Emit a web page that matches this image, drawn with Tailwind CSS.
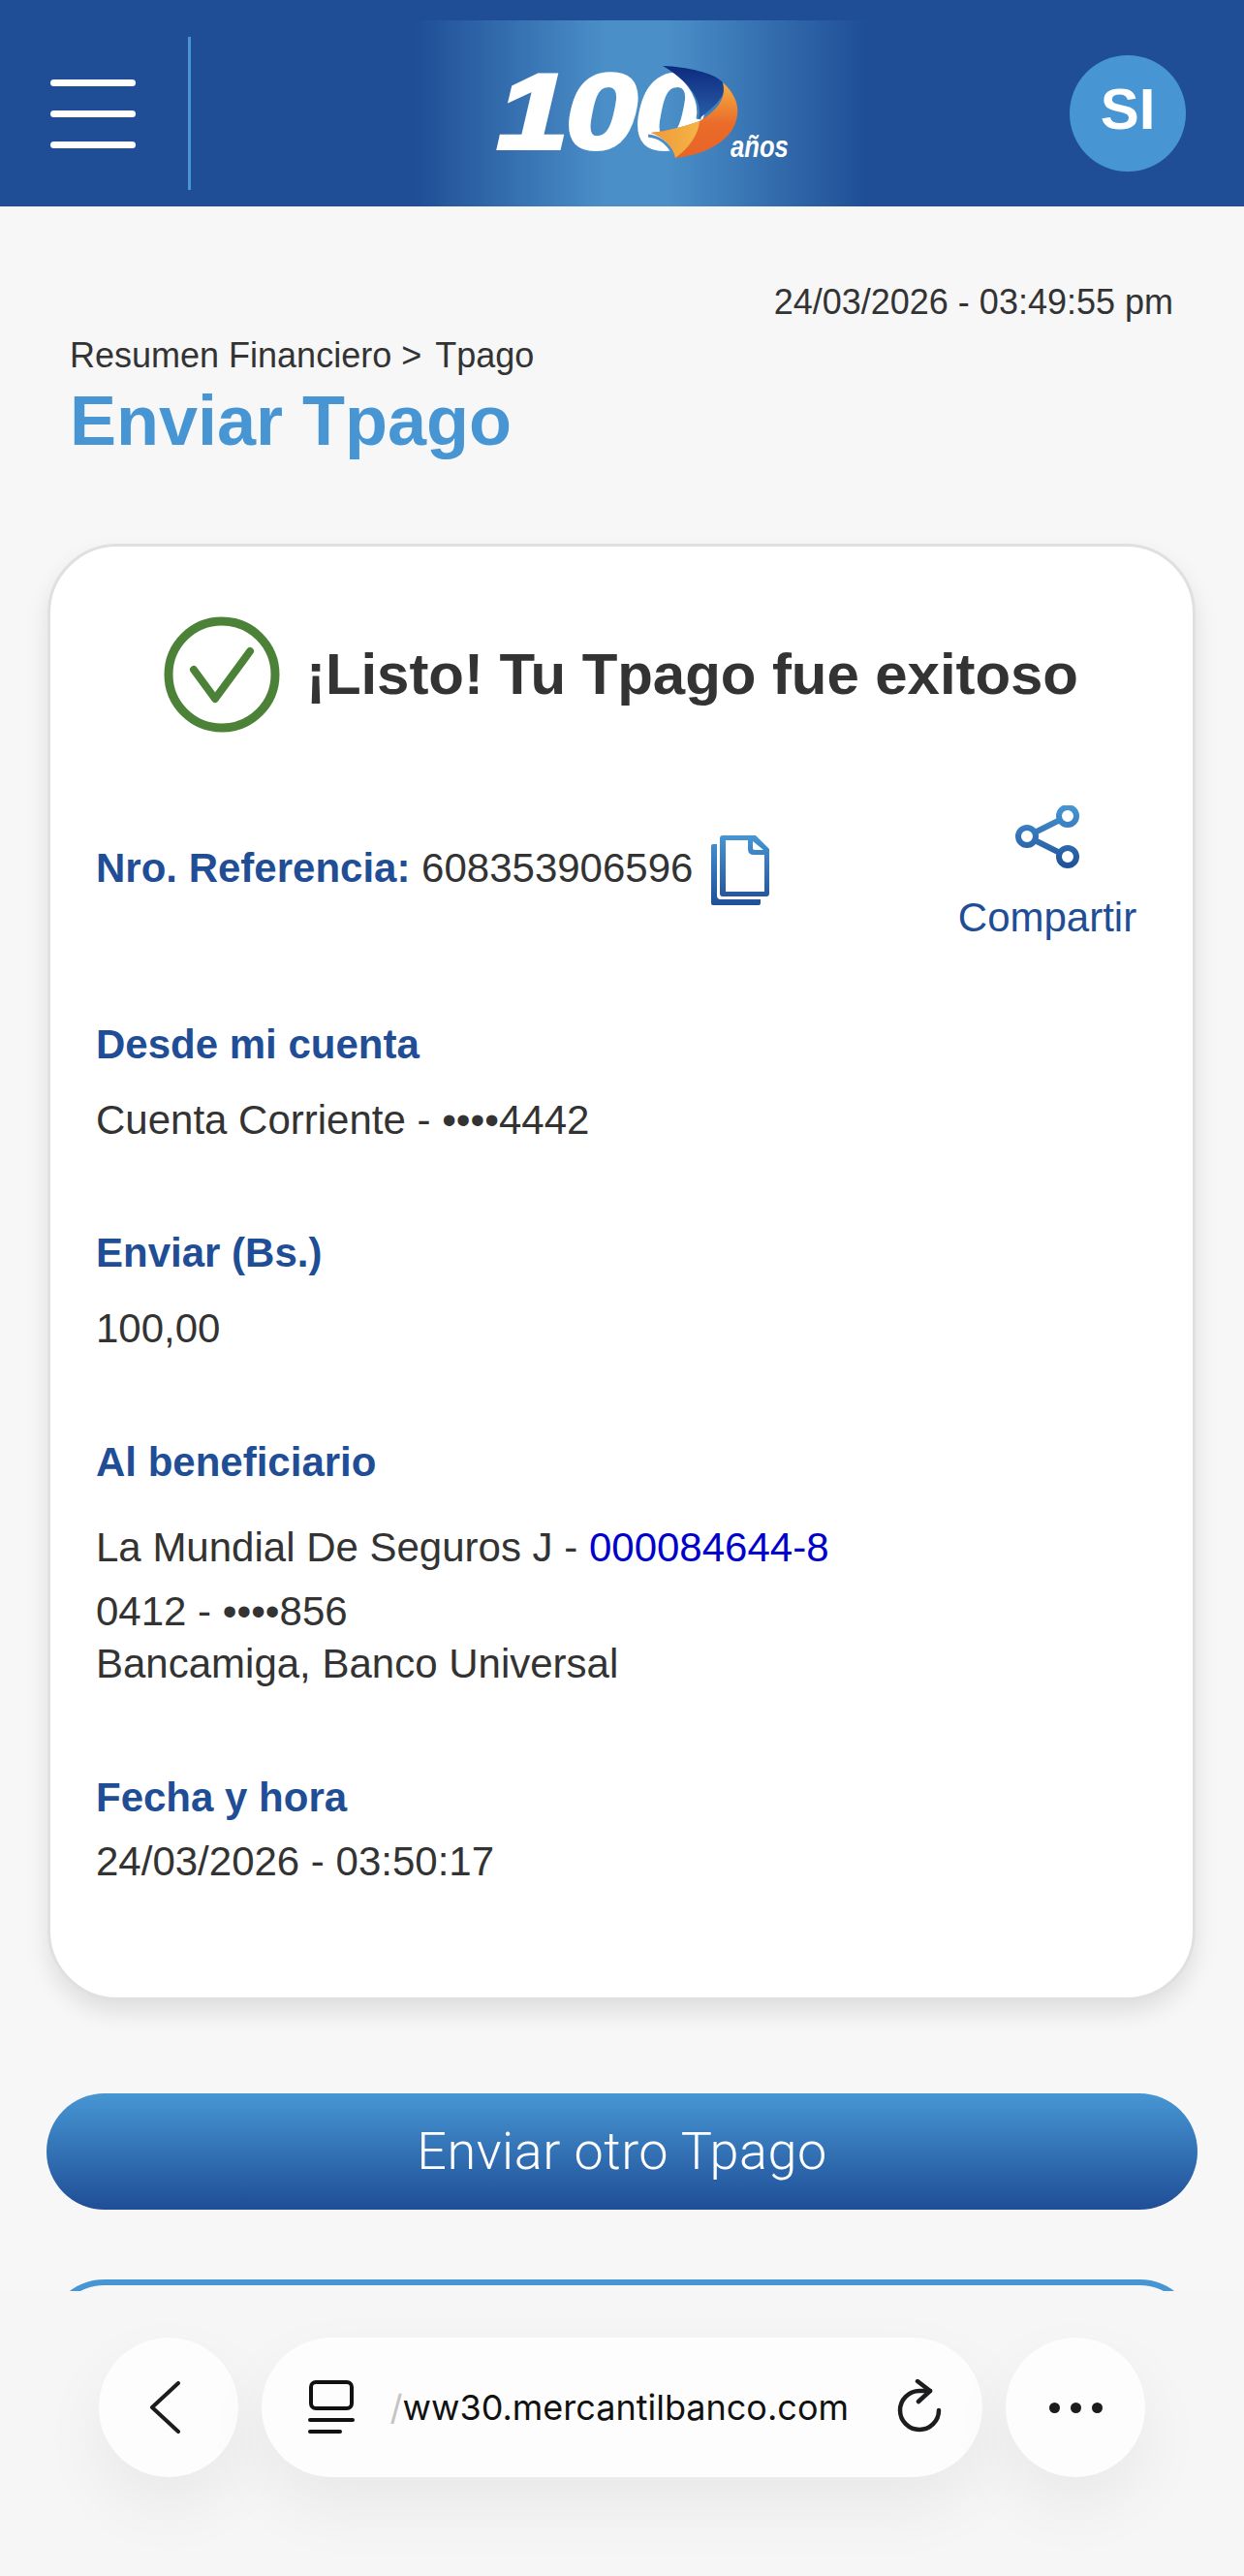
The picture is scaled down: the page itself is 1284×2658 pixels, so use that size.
<!DOCTYPE html>
<html lang="es">
<head>
  <meta charset="UTF-8">
  <title>Enviar Tpago</title>
  <script src="https://cdn.jsdelivr.net/npm/@tailwindcss/browser@4"></script>
</head>
<body class="relative w-[1284px] h-[2658px] overflow-hidden bg-[#f7f7f8] font-['Liberation_Sans',Arial,sans-serif] text-[#333]">

  <!-- Header -->
  <header class="flex items-center h-[213px] pt-[21px] bg-[#1f4e96]">
    <div class="ml-[52px] w-[88px] flex flex-col gap-[25px]">
      <span class="block h-[7px] rounded-full bg-white"></span>
      <span class="block h-[7px] rounded-full bg-white"></span>
      <span class="block h-[7px] rounded-full bg-white"></span>
    </div>
    <div class="ml-[54px] w-[3px] h-[158px] bg-[#4796d3]"></div>

    <!-- Logo -->
    <div class="relative ml-[232px] w-[465px] h-[192px] self-end shrink-0 overflow-hidden bg-[linear-gradient(90deg,#1f4e96,#4a8fc8_42%,#4a8fc8_56%,#1f4e96)]">
      <span class="absolute left-[84px] top-[34px] origin-left scale-x-[1.2] font-bold italic text-[110px] leading-[120px] tracking-[-2px] text-white [-webkit-text-stroke:4px_white]">100</span>
      <svg class="absolute left-[230px] top-[40px]" width="110" height="110" viewBox="0 0 110 110">
        <defs>
          <linearGradient id="sailTop" x1="0" y1="0" x2="0" y2="1"><stop offset="0" stop-color="#0d2a7f"/><stop offset="1" stop-color="#2a5fa8"/></linearGradient>
          <linearGradient id="sailRight" x1="0" y1="0" x2="0" y2="1"><stop offset="0" stop-color="#f4b043"/><stop offset="0.55" stop-color="#ea6b2a"/><stop offset="1" stop-color="#e86427"/></linearGradient>
          <linearGradient id="sailLeft" x1="0" y1="0" x2="1" y2="0"><stop offset="0" stop-color="#ef9a3a"/><stop offset="1" stop-color="#f4b445"/></linearGradient>
        </defs>
        <path d="M10 79 C20 80 30 86 36 98" fill="none" stroke="#4a8fc8" stroke-width="3"/>
        <path d="M33 9 C55 22 66 44 62 62" fill="none" stroke="#3f83bf" stroke-width="5"/>
        <path d="M25 7 C50 8 78 14 87 24 C92 32 88 42 62 62 C66 48 58 26 25 7 Z" fill="url(#sailTop)"/>
        <path d="M87 24 C98 34 104 46 102 58 C100 72 92 80 84 86 C70 96 54 100 38 102 C37 94 30 82 13 76 C30 74 46 70 63 64 C76 56 92 44 87 24 Z" fill="url(#sailRight)"/>
        <path d="M13 76 C30 74 46 70 63 64 C62 78 52 92 38 102 C37 94 30 82 13 76 Z" fill="url(#sailLeft)"/>
      </svg>
      <span class="absolute left-[325px] top-[113px] origin-left scale-x-[0.8] font-bold italic text-[32px] leading-[34px] text-white">años</span>
    </div>

    <div class="ml-[210px] w-[120px] h-[120px] pb-[8px] shrink-0 rounded-full bg-[#4796d3] flex items-center justify-center text-white font-bold text-[60px] leading-[70px]">SI</div>
  </header>

  <main class="relative">
    <p class="absolute right-[73px] top-[78px] text-[36px] leading-[42px]">24/03/2026 - 03:49:55 pm</p>
    <div class="pt-[133px] pl-[72px]">
      <p class="text-[36px] leading-[42px]">Resumen Financiero &gt; <span class="ml-[4px]">Tpago</span></p>
      <h1 class="mt-[4px] font-bold text-[72px] leading-[84px] text-[#4796d3]">Enviar Tpago</h1>
    </div>

    <!-- Card -->
    <section class="ml-[49px] mt-[85px] w-[1185px] h-[1503px] rounded-[72px] border-[3px] border-[#dfe0e1] bg-white shadow-[0_12px_24px_rgba(0,0,0,0.10)] pl-[47px] pr-[60px] pt-[72px]">
      <div class="flex items-center h-[120px] ml-[70px]">
        <svg width="120" height="120" viewBox="0 0 120 120" fill="none" stroke="#4c8238">
          <circle cx="60" cy="60" r="55" stroke-width="9"/>
          <path d="M31 55 L53 85 L89 36" stroke-width="8" stroke-linecap="round" stroke-linejoin="round"/>
        </svg>
        <h2 class="ml-[27px] font-bold text-[60px] leading-[70px] tracking-[-0.07px] whitespace-nowrap">¡Listo! Tu Tpago fue exitoso</h2>
      </div>

      <div class="relative flex items-center h-[72px] mt-[104px]">
        <p class="text-[42px] leading-[50px]"><b class="text-[#1f4e96]">Nro. Referencia:</b> 608353906596</p>
        <svg class="ml-[19px] mt-[4px]" width="61" height="73" viewBox="0 0 61 73">
          <defs>
            <linearGradient id="iconGrad" gradientUnits="userSpaceOnUse" x1="0" y1="0" x2="0" y2="73"><stop offset="0" stop-color="#4796d3"/><stop offset="1" stop-color="#1f4e96"/></linearGradient>
          </defs>
          <path d="M2 9 H6 V62 Q6 66 10 66 H51 V70 Q51 72 49 72 H2 Q0 72 0 70 V11 Q0 9 2 9 Z" fill="url(#iconGrad)"/>
          <path d="M9 3 Q9 0 12 0 H46 L60 14 V60 Q60 63 57 63 H12 Q9 63 9 60 Z M15 5 V58 H55 V20 H44 Q38 20 38 14 V5 Z M43 6 V13 Q43 15 45 15 H54 Z" fill="url(#iconGrad)" fill-rule="evenodd"/>
        </svg>
        <!-- Share -->
        <div class="absolute left-[891px] top-[-29px] w-[182px] flex flex-col items-center">
          <svg width="66" height="66" viewBox="0 0 66 66" fill="none" stroke="url(#iconGrad2)" stroke-width="6">
            <defs>
              <linearGradient id="iconGrad2" gradientUnits="userSpaceOnUse" x1="0" y1="0" x2="0" y2="66"><stop offset="0" stop-color="#4796d3"/><stop offset="1" stop-color="#1f4e96"/></linearGradient>
            </defs>
            <circle cx="54" cy="11" r="9"/>
            <circle cx="12" cy="32" r="9"/>
            <circle cx="54" cy="53" r="9"/>
            <path d="M20 28 L46 15 M20 36 L46 49"/>
          </svg>
          <span class="mt-[25px] text-[42px] leading-[50px] text-[#1f4e96]">Compartir</span>
        </div>
      </div>

      <div class="mt-[121px]">
        <h3 class="font-bold text-[42px] leading-[50px] text-[#1f4e96]">Desde mi cuenta</h3>
        <p class="mt-[28px] text-[42px] leading-[50px]">Cuenta Corriente - ••••4442</p>
      </div>

      <div class="mt-[87px]">
        <h3 class="font-bold text-[42px] leading-[50px] text-[#1f4e96]">Enviar (Bs.)</h3>
        <p class="mt-[28px] text-[42px] leading-[50px]">100,00</p>
      </div>

      <div class="mt-[88px]">
        <h3 class="font-bold text-[42px] leading-[50px] text-[#1f4e96]">Al beneficiario</h3>
        <p class="mt-[38px] text-[42px] leading-[50px]">La Mundial De Seguros J - <span class="text-[#0000cd]">000084644-8</span></p>
        <p class="mt-[14px] text-[42px] leading-[54px]">0412 - ••••856<br>Bancamiga, Banco Universal</p>
      </div>

      <div class="mt-[86px]">
        <h3 class="font-bold text-[42px] leading-[50px] text-[#1f4e96]">Fecha y hora</h3>
        <p class="mt-[16px] text-[42px] leading-[50px]">24/03/2026 - 03:50:17</p>
      </div>
    </section>

    <!-- Buttons -->
    <button class="block mx-[48px] mt-[96px] w-[1188px] h-[120px] rounded-full bg-[linear-gradient(180deg,#4796d3,#1f4e96)] text-white font-['Roboto',sans-serif] font-light text-[54px] leading-[64px] tracking-[0.5px]">Enviar otro Tpago</button>
    <div class="mx-[48px] mt-[72px] h-[120px] rounded-full border-[6px] border-[#4796d3]"></div>
  </main>

  <!-- Browser toolbar -->
  <div class="absolute left-0 bottom-0 w-full h-[294px] bg-[#f6f6f7] pt-[48px] pl-[102px] flex items-start">
    <div class="w-[144px] h-[144px] rounded-full bg-[#fdfdfd] shadow-[0_30px_70px_rgba(0,0,0,0.06)] flex items-center justify-center">
      <svg class="mr-[8px]" width="32" height="54" viewBox="0 0 32 54" fill="none" stroke="#1c1c1e" stroke-width="4" stroke-linecap="round" stroke-linejoin="round"><path d="M30 2 L3 27 L30 52"/></svg>
    </div>
    <div class="ml-[24px] w-[744px] h-[144px] rounded-full bg-[#fdfdfd] shadow-[0_30px_70px_rgba(0,0,0,0.06)] flex items-center pl-[48px]">
      <svg width="48" height="56" viewBox="0 0 48 56" fill="none" stroke="#111" stroke-linecap="round" class="shrink-0">
        <rect x="3" y="2" width="42" height="27" rx="5" stroke-width="4"/>
        <path d="M2 41 H46" stroke-width="4"/>
        <path d="M2 53 H33" stroke-width="4"/>
      </svg>
      <div class="ml-[43px] w-[467px] whitespace-nowrap flex justify-end font-['Inter',sans-serif] text-[36px] leading-[44px] text-[#111]">
        <span class="text-[#c4c4c4]">/</span><span>ww30.mercantilbanco.com</span>
      </div>
      <svg class="ml-[49px]" width="50" height="58" viewBox="0 0 50 58" fill="none" stroke="#1c1c1e" stroke-width="4.5" stroke-linecap="round" stroke-linejoin="round">
        <path d="M35 12 H24 A20 20 0 1 0 44 32"/>
        <path d="M22 2 L35 12 L23 23"/>
      </svg>
    </div>
    <div class="ml-[24px] w-[144px] h-[144px] rounded-full bg-[#fdfdfd] shadow-[0_30px_70px_rgba(0,0,0,0.06)] flex items-center justify-center gap-[11px]">
      <span class="w-[11px] h-[11px] rounded-full bg-[#1c1c1e]"></span>
      <span class="w-[11px] h-[11px] rounded-full bg-[#1c1c1e]"></span>
      <span class="w-[11px] h-[11px] rounded-full bg-[#1c1c1e]"></span>
    </div>
  </div>

</body>
</html>
